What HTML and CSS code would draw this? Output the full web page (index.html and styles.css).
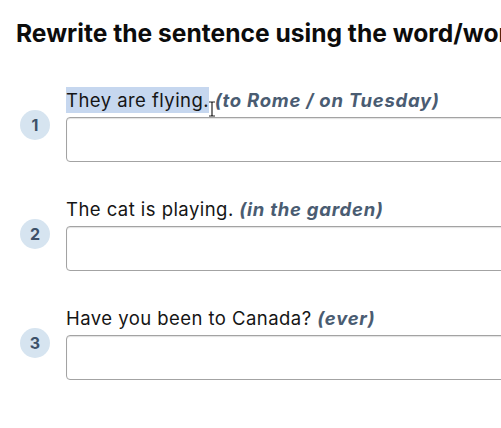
FILE: index.html
```html
<!DOCTYPE html>
<html>
<head>
<meta charset="utf-8">
<link rel="stylesheet" href="styles.css">
</head>
<body>
<h1 class="title">Rewrite the sentence using the word/words in brackets.</h1>
<ol class="list">
  <li class="item">
    <span class="num">1</span>
    <div class="body">
      <p class="prompt"><span class="sel">They are flying.</span><span class="cursor"><svg width="8" height="16" viewBox="0 0 8 16"><path d="M1 1h2.5l0.5 1 0.5-1H7M4 2v12M1 15h2.5l0.5-1 0.5 1H7" fill="none" stroke="#222" stroke-width="1.2"/></svg></span> <em class="hint">(to Rome / on Tuesday)</em></p>
      <input class="answer" type="text">
    </div>
  </li>
  <li class="item">
    <span class="num">2</span>
    <div class="body">
      <p class="prompt">The cat is playing. <em class="hint">(in the garden)</em></p>
      <input class="answer" type="text">
    </div>
  </li>
  <li class="item">
    <span class="num">3</span>
    <div class="body">
      <p class="prompt">Have you been to Canada? <em class="hint">(ever)</em></p>
      <input class="answer" type="text">
    </div>
  </li>
</ol>
</body>
</html>
```
FILE: styles.css
```css
html, body {
  margin: 0;
  padding: 0;
  background: #ffffff;
  overflow: hidden;
  width: 501px;
  height: 428px;
}
body {
  font-family: Inter, "Liberation Sans", Arial, sans-serif;
  color: #111111;
}
.title {
  margin: 0;
  padding: 18px 0 0 16px;
  font-size: 24.6px;
  line-height: 30px;
  font-weight: 700;
  white-space: nowrap;
  color: #0c0c0c;
}
.list {
  list-style: none;
  margin: 40px 0 0 0;
  padding: 0;
  display: flex;
  flex-direction: column;
  gap: 35px;
}
.item {
  display: flex;
  align-items: center;
  gap: 16px;
  padding-left: 20px;
}
.num {
  flex: 0 0 auto;
  width: 30px;
  height: 30px;
  border-radius: 50%;
  background: #d6e4f0;
  color: #3d5169;
  font-weight: 700;
  font-size: 16px;
  display: flex;
  align-items: center;
  justify-content: center;
}
.body {
  display: flex;
  flex-direction: column;
  gap: 5px;
}
.prompt {
  margin: 0;
  font-size: 18.5px;
  letter-spacing: 0.45px;
  line-height: 24px;
  white-space: nowrap;
  color: #151515;
}
.sel {
  background: #c6d7ef;
  padding: 2px 0;
}
.cursor {
  position: relative;
  display: inline-block;
  width: 0;
}
.cursor svg {
  position: absolute;
  left: -1px;
  top: -6px;
}
.hint {
  font-weight: 700;
  font-style: italic;
  color: #4a5c72;
  letter-spacing: 0.75px;
}
.answer {
  display: block;
  width: 480px;
  height: 45px;
  box-sizing: border-box;
  border: 1px solid #a3a3a3;
  border-radius: 4px;
  box-shadow: inset 0 1px 1px rgba(0,0,0,0.12);
  background: #ffffff;
  margin: 0;
  padding: 0 8px;
  font: inherit;
}
```
